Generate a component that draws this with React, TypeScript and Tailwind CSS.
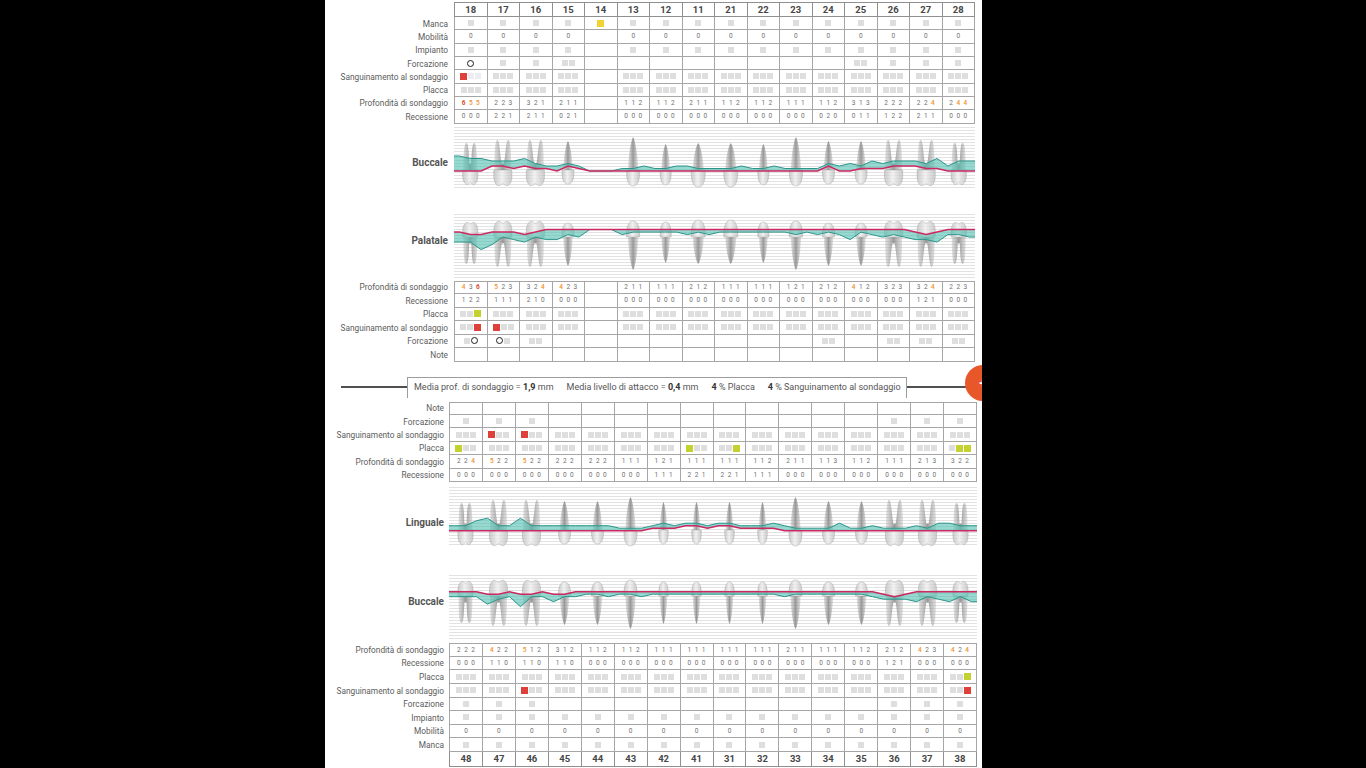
import React from "react";

const UPPER = ["18", "17", "16", "15", "14", "13", "12", "11", "21", "22", "23", "24", "25", "26", "27", "28"];
const LOWER = ["48", "47", "46", "45", "44", "43", "42", "41", "31", "32", "33", "34", "35", "36", "37", "38"];

// M molar, W wisdom tooth, P premolar, C canine, I/L upper incisors, i lower incisor, X missing
const UPPER_KIND = ["W", "M", "M", "P", "X", "C", "L", "I", "I", "L", "C", "P", "P", "M", "M", "W"];
const LOWER_KIND = ["W", "M", "M", "P", "P", "C", "i", "i", "i", "i", "C", "P", "P", "M", "M", "W"];

const fill = (v: string) => Array(16).fill(v) as string[];
const withAt = (base: string[], changes: Record<number, string>) =>
  base.map((v, i) => (i in changes ? changes[i] : v));

type Row = { label: string; cells: string[] };

// upper jaw, buccal side
const upperBuccalDepth = ["655", "223", "321", "211", "", "112", "112", "211", "112", "112", "111", "112", "313", "222", "224", "244"];
const upperBuccalRec = ["000", "221", "211", "021", "", "000", "000", "000", "000", "000", "000", "020", "011", "122", "211", "000"];

const upperTop: Row[] = [
  { label: "Manca", cells: withAt(fill("g"), { 4: "Y" }) },
  { label: "Mobilità", cells: withAt(fill("0"), { 4: "" }) },
  { label: "Impianto", cells: withAt(fill("g"), { 4: "" }) },
  { label: "Forcazione", cells: ["o", "g", "g", "gg", "", "", "", "", "", "", "", "", "gg", "g", "g", "g"] },
  { label: "Sanguinamento al sondaggio", cells: withAt(fill("ggg"), { 0: "rll", 4: "" }) },
  { label: "Placca", cells: withAt(fill("ggg"), { 4: "" }) },
  { label: "Profondità di sondaggio", cells: upperBuccalDepth },
  { label: "Recessione", cells: upperBuccalRec },
];

// upper jaw, palatal side
const palDepth = ["436", "523", "324", "423", "", "211", "111", "212", "111", "111", "121", "212", "412", "323", "324", "223"];
const palRec = ["122", "111", "210", "000", "", "000", "000", "000", "000", "000", "000", "000", "000", "000", "121", "000"];

const upperBottom: Row[] = [
  { label: "Profondità di sondaggio", cells: palDepth },
  { label: "Recessione", cells: palRec },
  { label: "Placca", cells: withAt(fill("ggg"), { 0: "ggy", 4: "" }) },
  { label: "Sanguinamento al sondaggio", cells: withAt(fill("ggg"), { 0: "ggr", 1: "rgg", 4: "" }) },
  { label: "Forcazione", cells: ["go", "og", "gg", "", "", "", "", "", "", "", "", "gg", "", "gg", "gg", "gg"] },
  { label: "Note", cells: fill("") },
];

// lower jaw, lingual side
const lingDepth = ["224", "522", "522", "222", "222", "111", "121", "111", "111", "112", "211", "113", "112", "111", "213", "322"];
const lingRec = ["000", "000", "000", "000", "000", "000", "111", "221", "221", "111", "000", "000", "000", "000", "000", "000"];

const lowerTop: Row[] = [
  { label: "Note", cells: fill("") },
  { label: "Forcazione", cells: ["g", "g", "g", "", "", "", "", "", "", "", "", "", "", "g", "g", "g"] },
  { label: "Sanguinamento al sondaggio", cells: withAt(fill("ggg"), { 1: "rgg", 2: "rgg" }) },
  { label: "Placca", cells: withAt(fill("ggg"), { 0: "ygg", 7: "ygg", 8: "ggy", 15: "gyy" }) },
  { label: "Profondità di sondaggio", cells: lingDepth },
  { label: "Recessione", cells: lingRec },
];

// lower jaw, buccal side
const lowBucDepth = ["222", "422", "512", "312", "112", "112", "111", "111", "111", "111", "211", "111", "112", "212", "423", "424"];
const lowBucRec = ["000", "110", "110", "110", "000", "000", "000", "000", "000", "000", "000", "000", "000", "121", "000", "000"];

const lowerBottom: Row[] = [
  { label: "Profondità di sondaggio", cells: lowBucDepth },
  { label: "Recessione", cells: lowBucRec },
  { label: "Placca", cells: withAt(fill("ggg"), { 15: "ggy" }) },
  { label: "Sanguinamento al sondaggio", cells: withAt(fill("ggg"), { 2: "rgg", 15: "ggr" }) },
  { label: "Forcazione", cells: ["g", "g", "g", "", "", "", "", "", "", "", "", "", "", "g", "g", "g"] },
  { label: "Impianto", cells: fill("g") },
  { label: "Mobilità", cells: fill("0") },
  { label: "Manca", cells: fill("g") },
];

function Mark({ c }: { c: string }) {
  if (c === "o") {
    return <span className="block h-[7px] w-[7px] rounded-full border-[1.5px] border-[#1e1e1e]" />;
  }
  const cls: Record<string, string> = {
    g: "h-[6px] w-[6px] bg-[#dedede]",
    l: "h-[6px] w-[6px] bg-[#ececf1]",
    r: "h-[7px] w-[7px] bg-[#e0403a]",
    y: "h-[7px] w-[7px] bg-[#c4d22f]",
    Y: "h-[7px] w-[7px] bg-[#f2d232]",
  };
  return <span className={`block ${cls[c]}`} />;
}

function Digits({ v }: { v: string }) {
  return (
    <span className="flex gap-[3.5px] text-[6.5px] leading-none text-[#707070]">
      {v.split("").map((d, i) => (
        <span
          key={i}
          className={
            Number(d) >= 6
              ? "font-bold text-[#e04a2c]"
              : Number(d) >= 4
                ? "font-medium text-[#f0922b]"
                : ""
          }
        >
          {d}
        </span>
      ))}
    </span>
  );
}

function Cell({ spec }: { spec: string }) {
  return (
    <div className="flex items-center justify-center gap-[1px] border-r border-b border-[#a6a6a6]">
      {spec === "" ? null : /^\d/.test(spec) ? (
        <Digits v={spec} />
      ) : (
        spec.split("").map((c, i) => <Mark key={i} c={c} />)
      )}
    </div>
  );
}

type Side = "upper" | "lower";

function TableRow({
  side,
  label,
  cells,
  h,
  first,
}: {
  side: Side;
  label: string;
  cells: string[];
  h: string;
  first?: boolean;
}) {
  return (
    <div className={`flex ${h}`}>
      <div
        className={`flex items-center justify-end whitespace-nowrap text-right text-[8.3px] leading-none text-[#5c5c5c] ${
          side === "upper" ? "w-[129px] pr-[6px]" : "w-[124px] pr-[5px]"
        }`}
      >
        {label}
      </div>
      <div
        className={`grid grid-cols-[repeat(16,minmax(0,1fr))] border-l border-[#a6a6a6] ${
          side === "upper" ? "w-[521px]" : "w-[528px]"
        } ${first ? "border-t" : ""}`}
      >
        {cells.map((c, i) => (
          <Cell key={i} spec={c} />
        ))}
      </div>
    </div>
  );
}

function HeaderRow({ side, teeth, first }: { side: Side; teeth: string[]; first?: boolean }) {
  return (
    <div className="flex h-[15px]">
      <div className={side === "upper" ? "w-[129px]" : "w-[124px]"} />
      <div
        className={`grid grid-cols-[repeat(16,minmax(0,1fr))] border-l border-[#8f8f8f] ${
          side === "upper" ? "w-[521px]" : "w-[528px]"
        } ${first ? "border-t" : ""}`}
      >
        {teeth.map((t) => (
          <div
            key={t}
            className="flex items-center justify-center border-r border-b border-[#8f8f8f] text-[9.5px] font-bold leading-none text-[#464646]"
          >
            {t}
          </div>
        ))}
      </div>
    </div>
  );
}

const SHAPES: Record<string, { w: number; R: number; c: number }> = {
  W: { w: 15, R: 27, c: 14 },
  M: { w: 18, R: 30, c: 15 },
  P: { w: 12, R: 29, c: 14 },
  C: { w: 13, R: 33, c: 16 },
  L: { w: 11, R: 26, c: 15 },
  I: { w: 14, R: 27, c: 17 },
  i: { w: 9.5, R: 28, c: 14 },
};

function Tooth({ kind, x, cej, flip, uid }: { kind: string; x: number; cej: number; flip: boolean; uid: string }) {
  const s = SHAPES[kind];
  if (!s) return null;
  const h = s.w / 2;
  const R = s.R;
  const c = s.c;
  let crown: string;
  let root: string;
  if (kind === "M" || kind === "W") {
    crown = `M${-h} 0C${-h - 0.5} ${c * 0.5} ${-h} ${c * 0.85} ${-h + 3} ${c}Q${-h / 2} ${c + 2} 0 ${c - 1.5}Q${h / 2} ${c + 2} ${h - 3} ${c}C${h} ${c * 0.85} ${h + 0.5} ${c * 0.5} ${h} 0Z`;
    root = `M${-h + 0.5} 0C${-h + 0.5} ${-R * 0.5} ${-h + 1} ${-R} ${-h + 3.5} ${-R}C${-h + 6} ${-R} ${-h + 6} ${-R * 0.5} -1 -6Q0 -7 1 -6C${h - 6} ${-R * 0.5} ${h - 6} ${-R} ${h - 3.5} ${-R}C${h - 1} ${-R} ${h - 0.5} ${-R * 0.5} ${h - 0.5} 0Z`;
  } else {
    crown = `M${-h} 0C${-h - 0.4} ${c * 0.55} ${-h * 0.8} ${c} 0 ${c}C${h * 0.8} ${c} ${h + 0.4} ${c * 0.55} ${h} 0Z`;
    root = `M${-h * 0.8} 0C${-h * 0.7} ${-R * 0.5} ${-h * 0.3} ${-R * 0.92} 0 ${-R}C${h * 0.3} ${-R * 0.92} ${h * 0.7} ${-R * 0.5} ${h * 0.8} 0Z`;
  }
  return (
    <g transform={`translate(${x} ${cej}) scale(1 ${flip ? -1 : 1})`}>
      <path d={root} fill={`url(#${uid}-root)`} />
      <path d={crown} fill={`url(#${uid}-crown)`} stroke="#9e9e9e" strokeOpacity="0.55" strokeWidth="0.7" />
    </g>
  );
}

function Chart({
  uid,
  side,
  label,
  labelTop,
  height,
  base,
  dir,
  cej,
  kinds,
  depth,
  rec,
}: {
  uid: string;
  side: Side;
  label: string;
  labelTop: string;
  height: number;
  base: number;
  dir: 1 | -1;
  cej: number;
  kinds: string[];
  depth: string[];
  rec: string[];
}) {
  const width = side === "upper" ? 521 : 528;
  const col = width / 16;
  const sc = 2.5;
  const pink: [number, number][] = [];
  const teal: [number, number][] = [];
  for (let i = 0; i < 16; i++) {
    for (let s = 0; s < 3; s++) {
      const x = col * i + (col * (2 * s + 1)) / 6;
      const d = depth[i] ? Number(depth[i][s]) : 0;
      const r = rec[i] ? Number(rec[i][s]) : 0;
      const py = base + dir * r * sc;
      pink.push([x, py]);
      teal.push([x, py + dir * d * sc]);
    }
  }
  pink.unshift([0, pink[0][1]]);
  pink.push([width, pink[pink.length - 1][1]]);
  teal.unshift([0, teal[0][1]]);
  teal.push([width, teal[teal.length - 1][1]]);
  const pts = (a: [number, number][]) => a.map(([x, y]) => `${x.toFixed(1)},${y.toFixed(1)}`).join(" ");
  const area = pts(teal) + " " + pts([...pink].reverse());
  const lines = Array.from({ length: Math.floor(height / 3) }, (_, k) => 1.5 + k * 3);

  return (
    <div className="flex">
      <div
        className={`text-right text-[10px] font-bold leading-none text-[#555] ${labelTop} ${
          side === "upper" ? "w-[129px] pr-[6px]" : "w-[124px] pr-[5px]"
        }`}
      >
        {label}
      </div>
      <svg width={width} height={height} viewBox={`0 0 ${width} ${height}`} className="block">
        <defs>
          <linearGradient id={`${uid}-root`} x1="0" x2="1" y1="0" y2="0">
            <stop offset="0" stopColor="#b4b4b4" stopOpacity="0.4" />
            <stop offset="0.5" stopColor="#7a7a7a" stopOpacity="0.75" />
            <stop offset="1" stopColor="#b4b4b4" stopOpacity="0.4" />
          </linearGradient>
          <linearGradient id={`${uid}-crown`} x1="0" x2="1" y1="0" y2="0">
            <stop offset="0" stopColor="#b8b8b8" stopOpacity="0.7" />
            <stop offset="0.45" stopColor="#efefef" stopOpacity="0.8" />
            <stop offset="1" stopColor="#b8b8b8" stopOpacity="0.7" />
          </linearGradient>
        </defs>
        {lines.map((y) => (
          <line key={y} x1="0" x2={width} y1={y} y2={y} stroke="#dadada" strokeWidth="0.8" />
        ))}
        {kinds.map((k, i) =>
          k === "X" ? null : (
            <Tooth key={i} kind={k} x={col * i + col / 2} cej={cej} flip={dir === 1} uid={uid} />
          ),
        )}
        <polygon points={area} fill="#4fc0b0" fillOpacity="0.6" />
        <polyline points={pts(teal)} fill="none" stroke="#2a958a" strokeWidth="1" />
        <polyline points={pts(pink)} fill="none" stroke="#cc2862" strokeWidth="1.5" />
      </svg>
    </div>
  );
}

function SummaryBar() {
  return (
    <div className="relative h-[40px] pt-[15px]">
      <div className="flex h-[21px] items-center">
        <div className="ml-[16px] h-[2px] w-[66px] bg-[#505050]" />
        <div className="flex h-[21px] w-[500px] items-center gap-[13px] whitespace-nowrap border-x border-t border-[#9c9c9c] bg-white pl-[6px] text-[9px] leading-none text-[#555]">
          <span>
            Media prof. di sondaggio = <b className="font-bold text-[#333]">1,9</b> mm
          </span>
          <span>
            Media livello di attacco = <b className="font-bold text-[#333]">0,4</b> mm
          </span>
          <span>
            <b className="font-bold text-[#333]">4</b> % Placca
          </span>
          <span>
            <b className="font-bold text-[#333]">4</b> % Sanguinamento al sondaggio
          </span>
        </div>
        <div className="h-[2px] flex-1 bg-[#505050]" />
      </div>
      <div className="absolute left-[640px] top-[3px] flex h-[36px] w-[36px] items-center justify-center rounded-full bg-[#e8572a] text-[14px] font-bold leading-none text-white">
        +
      </div>
    </div>
  );
}

export default function App() {
  return (
    <div className="h-[768px] w-full overflow-hidden bg-black font-['Roboto',sans-serif] antialiased">
      <div className="ml-[325px] h-[768px] w-[657px] overflow-hidden bg-white pt-[2px]">
        <HeaderRow side="upper" teeth={UPPER} first />
        {upperTop.map((r) => (
          <TableRow key={r.label} side="upper" label={r.label} cells={r.cells} h="h-[13.33px]" />
        ))}

        <div className="pt-[2px]">
          <Chart
            uid="ub"
            side="upper"
            label="Buccale"
            labelTop="pt-[32px]"
            height={64}
            base={45}
            dir={-1}
            cej={44}
            kinds={UPPER_KIND}
            depth={upperBuccalDepth}
            rec={upperBuccalRec}
          />
        </div>
        <div className="pt-[23px]">
          <Chart
            uid="up"
            side="upper"
            label="Palatale"
            labelTop="pt-[23px]"
            height={67}
            base={16.6}
            dir={1}
            cej={24}
            kinds={UPPER_KIND}
            depth={palDepth}
            rec={palRec}
          />
        </div>

        <div className="pt-[1px]">
          {upperBottom.map((r, i) => (
            <TableRow key={r.label} side="upper" label={r.label} cells={r.cells} h="h-[13.5px]" first={i === 0} />
          ))}
        </div>

        <SummaryBar />

        {lowerTop.map((r, i) => (
          <TableRow key={r.label} side="lower" label={r.label} cells={r.cells} h="h-[13.43px]" first={i === 0} />
        ))}

        <div className="pt-[4px]">
          <Chart
            uid="ll"
            side="lower"
            label="Linguale"
            labelTop="pt-[32px]"
            height={62}
            base={44.7}
            dir={-1}
            cej={44}
            kinds={LOWER_KIND}
            depth={lingDepth}
            rec={lingRec}
          />
        </div>
        <div className="pt-[26px]">
          <Chart
            uid="lb"
            side="lower"
            label="Buccale"
            labelTop="pt-[23px]"
            height={67}
            base={17.7}
            dir={1}
            cej={22}
            kinds={LOWER_KIND}
            depth={lowBucDepth}
            rec={lowBucRec}
          />
        </div>

        <div className="pt-[2px]">
          {lowerBottom.map((r, i) => (
            <TableRow key={r.label} side="lower" label={r.label} cells={r.cells} h="h-[13.6px]" first={i === 0} />
          ))}
          <HeaderRow side="lower" teeth={LOWER} />
        </div>
      </div>
    </div>
  );
}
